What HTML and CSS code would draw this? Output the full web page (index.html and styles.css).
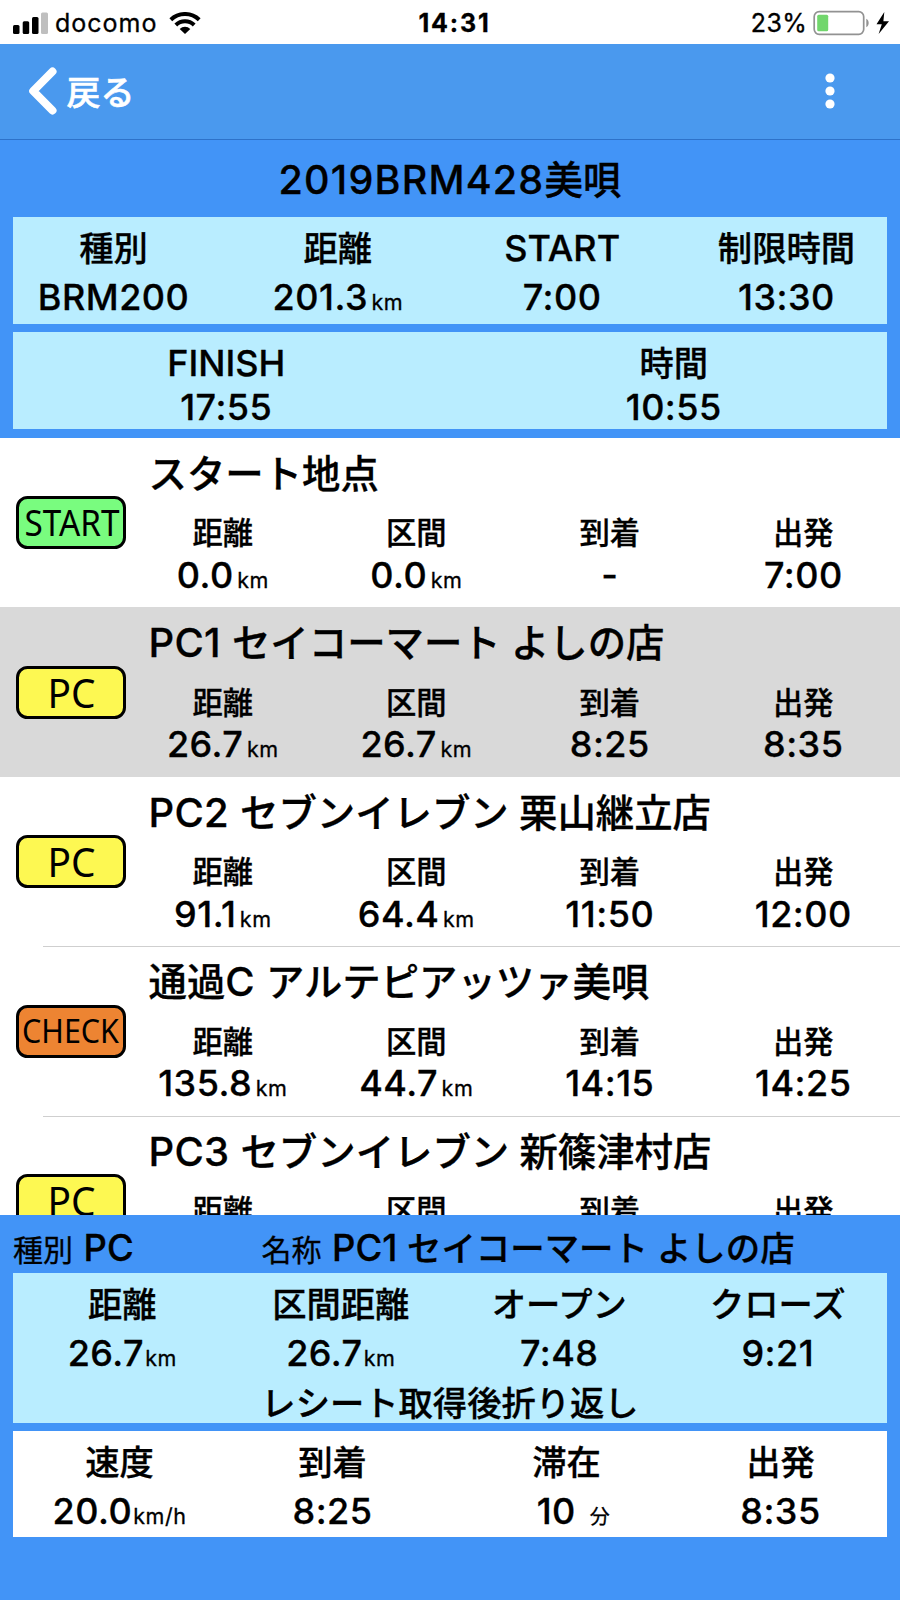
FILE: index.html
```
<!DOCTYPE html>
<html lang="ja">
<head>
  <meta charset="UTF-8">
  <title>2019BRM428美唄</title>
  <link rel="stylesheet" href="styles.css">
</head>
<body>

<div class="status-bar">
  <div class="carrier">
    <svg width="36" height="22" viewBox="0 0 36 22">
      <rect x="0" y="13" width="6.5" height="9" rx="1.5"/>
      <rect x="9.7" y="9.3" width="6.5" height="12.7" rx="1.5"/>
      <rect x="19" y="5" width="6.5" height="17" rx="1.5"/>
      <rect x="28" y="0.5" width="7" height="21.5" rx="1.5" fill="#bfbfbf"/>
    </svg>
    <span class="carrier-name">docomo</span>
    <svg class="wifi" width="32" height="22" viewBox="0 0 32 22">
      <g fill="none" stroke="#000" stroke-width="4">
        <path d="M1.8 7.7a20.5 20.5 0 0 1 28.4 0"/>
        <path d="M6.8 13a13.3 13.3 0 0 1 18.4 0"/>
      </g>
      <path d="M10.7 16.9a7.6 7.6 0 0 1 10.6 0L16 22z"/>
    </svg>
  </div>
  <div class="clock">14:31</div>
  <div class="power">
    <span>23%</span>
    <svg class="battery" width="77" height="26" viewBox="0 0 77 26">
      <rect x="1.2" y="1.7" width="49.5" height="22.6" rx="5" fill="none" stroke="#929292" stroke-width="1.7"/>
      <rect x="4.2" y="4.8" width="11" height="16.4" rx="1.5" fill="#71d66c"/>
      <path d="M53.3 8.8v8.4c3.2-1.4 3.2-7 0-8.4z" fill="#929292"/>
      <path d="M71.3 2 63.5 14.3h5.3L65.6 24 76 11.3h-5.6z"/>
    </svg>
  </div>
</div>

<div class="nav">
  <div class="back">
    <svg width="32" height="50" viewBox="0 0 32 50">
      <path d="M24.5 5.5 5.2 25l19.3 19.5" fill="none" stroke="#fff" stroke-width="8" stroke-linecap="round" stroke-linejoin="round"/>
    </svg>
    <span>戻る</span>
  </div>
  <svg width="10" height="36" viewBox="0 0 10 36" fill="#fff">
    <circle cx="5" cy="5" r="4.6"/>
    <circle cx="5" cy="18" r="4.6"/>
    <circle cx="5" cy="31" r="4.6"/>
  </svg>
</div>

<div class="summary">
  <h1><span class="en">2019BRM428</span>美唄</h1>
  <div class="panel panel-plan">
    <div class="cell"><div class="label">種別</div><div class="value">BRM200</div></div>
    <div class="cell"><div class="label">距離</div><div class="value">201.3<small>km</small></div></div>
    <div class="cell"><div class="label en">START</div><div class="value">7:00</div></div>
    <div class="cell"><div class="label">制限時間</div><div class="value">13:30</div></div>
  </div>
  <div class="panel panel-result">
    <div class="cell"><div class="label en">FINISH</div><div class="value">17:55</div></div>
    <div class="cell"><div class="label">時間</div><div class="value">10:55</div></div>
  </div>
</div>

<div class="list">
  <div class="row">
    <svg class="badge badge-start" width="110" height="53">
      <rect x="1.5" y="1.5" width="107" height="50" rx="10"/>
      <text x="8.5" y="39.7" font-size="36" textLength="95" lengthAdjust="spacingAndGlyphs">START</text>
    </svg>
    <div class="point">
      <div class="name">スタート地点</div>
      <div class="times">
        <div class="cell"><div class="label">距離</div><div class="value">0.0<small>km</small></div></div>
        <div class="cell"><div class="label">区間</div><div class="value">0.0<small>km</small></div></div>
        <div class="cell"><div class="label">到着</div><div class="value">-</div></div>
        <div class="cell"><div class="label">出発</div><div class="value">7:00</div></div>
      </div>
    </div>
  </div>

  <div class="row selected">
    <svg class="badge badge-pc" width="110" height="53">
      <rect x="1.5" y="1.5" width="107" height="50" rx="10"/>
      <text x="31.5" y="41.5" font-size="40" textLength="48" lengthAdjust="spacingAndGlyphs">PC</text>
    </svg>
    <div class="point">
      <div class="name"><span class="en">PC1 </span>セイコーマート よしの店</div>
      <div class="times">
        <div class="cell"><div class="label">距離</div><div class="value">26.7<small>km</small></div></div>
        <div class="cell"><div class="label">区間</div><div class="value">26.7<small>km</small></div></div>
        <div class="cell"><div class="label">到着</div><div class="value">8:25</div></div>
        <div class="cell"><div class="label">出発</div><div class="value">8:35</div></div>
      </div>
    </div>
  </div>

  <div class="row">
    <svg class="badge badge-pc" width="110" height="53">
      <rect x="1.5" y="1.5" width="107" height="50" rx="10"/>
      <text x="31.5" y="41.5" font-size="40" textLength="48" lengthAdjust="spacingAndGlyphs">PC</text>
    </svg>
    <div class="point">
      <div class="name"><span class="en">PC2 </span>セブンイレブン 栗山継立店</div>
      <div class="times">
        <div class="cell"><div class="label">距離</div><div class="value">91.1<small>km</small></div></div>
        <div class="cell"><div class="label">区間</div><div class="value">64.4<small>km</small></div></div>
        <div class="cell"><div class="label">到着</div><div class="value">11:50</div></div>
        <div class="cell"><div class="label">出発</div><div class="value">12:00</div></div>
      </div>
    </div>
  </div>

  <div class="row lined">
    <svg class="badge badge-check" width="110" height="53">
      <rect x="1.5" y="1.5" width="107" height="50" rx="10"/>
      <text x="6" y="38" font-size="32" textLength="97" lengthAdjust="spacingAndGlyphs">CHECK</text>
    </svg>
    <div class="point">
      <div class="name">通過<span class="en">C </span>アルテピアッツァ美唄</div>
      <div class="times">
        <div class="cell"><div class="label">距離</div><div class="value">135.8<small>km</small></div></div>
        <div class="cell"><div class="label">区間</div><div class="value">44.7<small>km</small></div></div>
        <div class="cell"><div class="label">到着</div><div class="value">14:15</div></div>
        <div class="cell"><div class="label">出発</div><div class="value">14:25</div></div>
      </div>
    </div>
  </div>

  <div class="row lined">
    <svg class="badge badge-pc" width="110" height="53">
      <rect x="1.5" y="1.5" width="107" height="50" rx="10"/>
      <text x="31.5" y="41.5" font-size="40" textLength="48" lengthAdjust="spacingAndGlyphs">PC</text>
    </svg>
    <div class="point">
      <div class="name"><span class="en">PC3 </span>セブンイレブン 新篠津村店</div>
      <div class="times">
        <div class="cell"><div class="label">距離</div></div>
        <div class="cell"><div class="label">区間</div></div>
        <div class="cell"><div class="label">到着</div></div>
        <div class="cell"><div class="label">出発</div></div>
      </div>
    </div>
  </div>
</div>

<div class="detail">
  <div class="detail-head">
    <div class="kind"><span class="caption">種別</span><span class="en">PC</span></div>
    <div><span class="caption">名称</span><span class="en">PC1 </span>セイコーマート よしの店</div>
  </div>
  <div class="panel panel-point">
    <div class="cell"><div class="label">距離</div><div class="value">26.7<small>km</small></div></div>
    <div class="cell"><div class="label">区間距離</div><div class="value">26.7<small>km</small></div></div>
    <div class="cell"><div class="label">オープン</div><div class="value">7:48</div></div>
    <div class="cell"><div class="label">クローズ</div><div class="value">9:21</div></div>
    <div class="memo">レシート取得後折り返し</div>
  </div>
  <div class="panel panel-input">
    <div class="cell"><div class="label">速度</div><div class="value">20.0<small>km/h</small></div></div>
    <div class="cell"><div class="label">到着</div><div class="value">8:25</div></div>
    <div class="cell stay"><div class="label">滞在</div><div class="value">10<small>分</small></div></div>
    <div class="cell"><div class="label">出発</div><div class="value">8:35</div></div>
  </div>
</div>

</body>
</html>
```
FILE: styles.css
```
* {
  box-sizing: border-box;
}

body {
  margin: 0;
  width: 900px;
  height: 1600px;
  overflow: hidden;
  display: flex;
  flex-direction: column;
  font-family: Inter, "Noto Sans CJK JP", sans-serif;
  font-weight: 500;
  -webkit-text-stroke: 0.3px currentColor;
  color: #000;
  background: #4294f7;
}

/* status bar */
.status-bar {
  flex: none;
  height: 43.5px;
  padding: 0 10px 0 13px;
  display: grid;
  grid-template-columns: 1fr auto 1fr;
  align-items: center;
  background: #fff;
  font-size: 25px;
  line-height: 46px;
}

.carrier, .power {
  display: flex;
  align-items: center;
}

.carrier-name {
  margin-left: 6px;
  font-weight: 400;
  letter-spacing: 1px;
}

.wifi {
  margin-left: 12px;
}

.clock {
  margin-left: 6px;
  font-weight: 700;
  letter-spacing: 1.8px;
}

.power {
  justify-content: flex-end;
  font-weight: 400;
}

.power span {
  letter-spacing: 0.3px;
}

.battery {
  margin-left: 6px;
}

/* navigation */
.nav {
  flex: none;
  height: 96px;
  padding: 0 65px 0 27.5px;
  display: flex;
  align-items: center;
  justify-content: space-between;
  background: #4a99ee;
  border-bottom: 1px solid #2d72c9;
}

.back {
  display: flex;
  align-items: center;
  color: #fff;
  font-size: 34px;
}

.back span {
  margin: -2px 0 0 7px;
  -webkit-text-stroke-width: 0.6px;
}

/* blue header */
.summary {
  flex: none;
  height: 298px;
  padding: 0 13px;
}

h1 {
  margin: 0;
  height: 77.5px;
  line-height: 81px;
  font-size: 38.5px;
  font-weight: 500;
  text-align: center;
}

h1 .en {
  font-size: 39.5px;
  letter-spacing: 1.2px;
}

.panel {
  display: grid;
  background: #b9edff;
}

.cell {
  text-align: center;
  white-space: nowrap;
}

.label {
  height: 48px;
  padding-top: 1px;
  font-size: 34.3px;
  line-height: 48px;
}

.value {
  font-size: 36px;
  line-height: 48px;
  letter-spacing: 0.5px;
}

.label.en {
  padding-top: 0;
  font-size: 36px;
}

small {
  margin-left: 3.5px;
  font-size: 21.5px;
  font-weight: 400;
}

.panel-plan {
  height: 106.5px;
  padding-top: 7px;
  grid-template-columns: repeat(4, 224.3px);
  justify-content: center;
}

.panel-plan .value, .panel-point .value, .panel-input .value {
  margin-top: 1px;
}

.panel-result {
  height: 97px;
  margin-top: 8.5px;
  padding-top: 7px;
  grid-template-columns: repeat(2, 447.5px);
  justify-content: center;
}

.panel-result .value {
  margin-top: -4px;
}

/* control points */
.list {
  flex: none;
  height: 777px;
  overflow: hidden;
  background: #fff;
}

.row {
  height: 169.5px;
  padding-left: 16px;
  display: flex;
}

.row.selected {
  background: #d9d9d9;
}

.row.lined {
  background: linear-gradient(#cfcfcf, #cfcfcf) 43px 0 / 857px 1px no-repeat;
}

.badge {
  flex: none;
  margin-top: 58.5px;
}

.badge rect {
  stroke: #000;
  stroke-width: 3;
}

.badge text {
  font-family: "Noto Sans", sans-serif;
  font-weight: 400;
  -webkit-text-stroke-width: 0.8px;
}

.badge-start rect {
  fill: #79fc7f;
}

.badge-pc rect {
  fill: #fdf852;
}

.badge-check rect {
  fill: #ed8432;
}

.point {
  flex: 1;
}

.name {
  margin-left: 22.5px;
  padding-top: 11px;
  font-size: 38.4px;
  line-height: 50px;
  white-space: nowrap;
}

.name .en {
  font-size: 40px;
  letter-spacing: 0.3px;
}

.times {
  margin-top: 14.5px;
  display: grid;
  grid-template-columns: repeat(4, 1fr);
}

.times .label {
  height: 40px;
  padding-top: 0;
  font-size: 30.3px;
  line-height: 40px;
}

.times .value {
  margin-top: 1.5px;
  line-height: 40px;
}

/* selected point */
.detail {
  flex: 1;
  padding: 0 13px;
}

.detail-head {
  height: 58.5px;
  display: flex;
  font-size: 34.4px;
  line-height: 67px;
  white-space: nowrap;
}

.detail-head .kind {
  width: 248.5px;
}

.detail-head .en {
  font-size: 36.5px;
}

.caption {
  margin-right: 10.5px;
  font-size: 30px;
  font-weight: 400;
}

.detail small {
  margin-left: 1px;
}

.panel-point {
  height: 149.5px;
  padding-top: 7px;
  grid-template-columns: repeat(4, 1fr);
  align-content: start;
}

.memo {
  margin-top: -2.5px;
  font-size: 34.3px;
  line-height: 48px;
  grid-column: 1 / -1;
  text-align: center;
}

.panel-input {
  height: 106.5px;
  margin-top: 8px;
  padding-top: 7px;
  grid-template-columns: 213px 213px 255px 173px;
  background: #fff;
}

.stay .value {
  padding-left: 14px;
}

.detail .stay small {
  margin-left: 14px;
  font-size: 20px;
}
```
